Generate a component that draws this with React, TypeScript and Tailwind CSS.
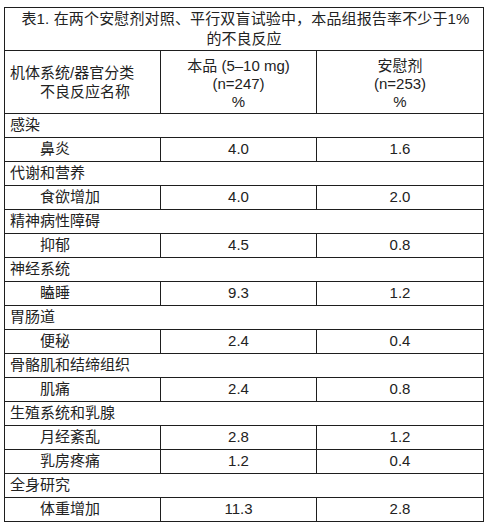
import React from "react";

type Row =
  | { kind: "cat"; label: string }
  | { kind: "item"; label: string; a: string; b: string };

const rows: Row[] = [
  { kind: "cat", label: "感染" },
  { kind: "item", label: "鼻炎", a: "4.0", b: "1.6" },
  { kind: "cat", label: "代谢和营养" },
  { kind: "item", label: "食欲增加", a: "4.0", b: "2.0" },
  { kind: "cat", label: "精神病性障碍" },
  { kind: "item", label: "抑郁", a: "4.5", b: "0.8" },
  { kind: "cat", label: "神经系统" },
  { kind: "item", label: "瞌睡", a: "9.3", b: "1.2" },
  { kind: "cat", label: "胃肠道" },
  { kind: "item", label: "便秘", a: "2.4", b: "0.4" },
  { kind: "cat", label: "骨骼肌和结缔组织" },
  { kind: "item", label: "肌痛", a: "2.4", b: "0.8" },
  { kind: "cat", label: "生殖系统和乳腺" },
  { kind: "item", label: "月经紊乱", a: "2.8", b: "1.2" },
  { kind: "item", label: "乳房疼痛", a: "1.2", b: "0.4" },
  { kind: "cat", label: "全身研究" },
  { kind: "item", label: "体重增加", a: "11.3", b: "2.8" },
];

export default function App() {
  return (
    <div
      className="w-[489px] h-[527px] bg-white pt-[7px] pl-[4px] text-[15px] text-[#222]"
      style={{ fontFamily: '"Liberation Sans", "Noto Sans CJK SC", sans-serif' }}
    >
      <div className="w-[480px] border-l border-t border-[#1e1e1e]">
        <div className="h-[43px] border-r border-b border-[#1e1e1e] flex flex-col items-center justify-center leading-[20px] text-center">
          <div className="tracking-[0.15px] pl-[3px]">表1. 在两个安慰剂对照、平行双盲试验中，本品组报告率不少于1%</div>
          <div>的不良反应</div>
        </div>
        <div className="flex h-[63px]">
          <div className="w-[156px] shrink-0 border-r border-b border-[#1e1e1e] flex flex-col justify-center pl-[5px] leading-[19px]">
            <div>机体系统/器官分类</div>
            <div className="pl-[30px]">不良反应名称</div>
          </div>
          <div className="w-[156px] shrink-0 border-r border-b border-[#1e1e1e] flex flex-col items-center justify-center leading-[18px] pt-[3px]">
            <div>本品 (5–10 mg)</div>
            <div>(n=247)</div>
            <div>%</div>
          </div>
          <div className="w-[167px] shrink-0 border-r border-b border-[#1e1e1e] flex flex-col items-center justify-center leading-[18px] pt-[3px]">
            <div>安慰剂</div>
            <div>(n=253)</div>
            <div>%</div>
          </div>
        </div>
        {rows.map((r, i) =>
          r.kind === "cat" ? (
            <div
              key={i}
              className="h-[24px] border-r border-b border-[#1e1e1e] flex items-center pl-[5px]"
            >
              {r.label}
            </div>
          ) : (
            <div key={i} className="flex h-[24px]">
              <div className="w-[156px] shrink-0 border-r border-b border-[#1e1e1e] flex items-center pl-[35px]">
                {r.label}
              </div>
              <div className="w-[156px] shrink-0 border-r border-b border-[#1e1e1e] flex items-center justify-center">
                {r.a}
              </div>
              <div className="w-[167px] shrink-0 border-r border-b border-[#1e1e1e] flex items-center justify-center">
                {r.b}
              </div>
            </div>
          )
        )}
      </div>
    </div>
  );
}
